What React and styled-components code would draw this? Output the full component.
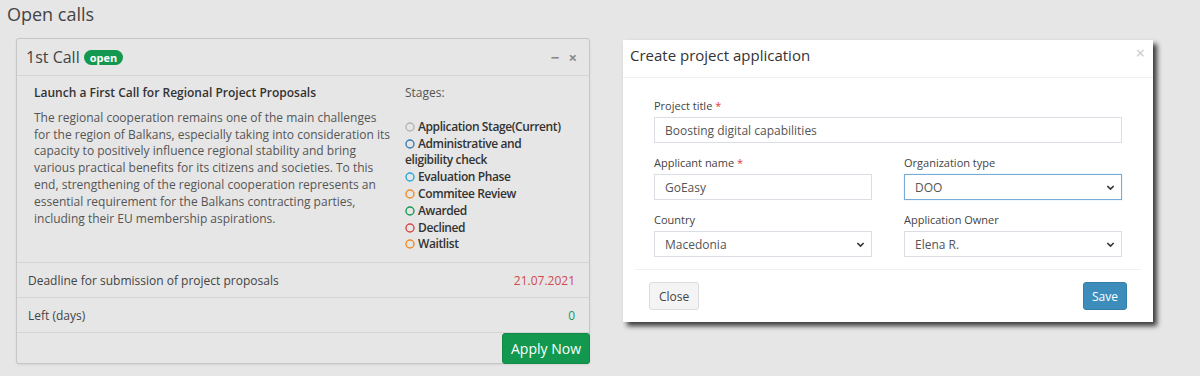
import React from 'react'
import styled, { createGlobalStyle } from 'styled-components'

const GlobalStyle = createGlobalStyle`
  body {
    margin: 0;
    background: #e6e6e6;
    font-family: "Open Sans", "Liberation Sans", sans-serif;
    color: #444;
  }
`

// ----
// Page

const Page = styled.div`
  width: 1200px;
  height: 376px;
  overflow: hidden;
  background: #e6e6e6;
`

const PageTitle = styled.h2`
  margin: 0;
  padding: 2px 7px 0 7px;
  font-size: 18px;
  font-weight: 400;
  line-height: 25px;
  color: #444;
`

const Columns = styled.div`
  display: flex;
  align-items: flex-start;
  gap: 33px;
  padding: 11px 0 0 16px;
`

// ---------
// Call card

const Card = styled.div`
  width: 574px;
  box-sizing: border-box;
  border: 1px solid #c6c6c6;
  border-radius: 3px;
  background: #e6e6e6;
  box-shadow: 0 1px 2px rgba(0, 0, 0, 0.08);
`

const CardHeader = styled.div`
  display: flex;
  align-items: center;
  height: 36px;
  padding: 0 12px 0 9px;
  border-bottom: 1px solid #d4d4d4;
`

const CardTitle = styled.div`
  flex: 1;
  display: flex;
  align-items: center;
  gap: 4px;
  font-size: 16px;
  color: #444;
`

const Badge = styled.span`
  display: inline-block;
  padding: 0 6px;
  height: 15px;
  line-height: 15px;
  border-radius: 8px;
  background: #12994f;
  color: #fff;
  font-size: 11px;
  font-weight: 700;
  margin-top: 1px;
`

const Tools = styled.div`
  display: flex;
  align-items: center;
  gap: 9px;
  color: #8a8a8a;
  font-weight: 700;
  font-size: 15px;
`

const CardBody = styled.div`
  display: grid;
  grid-template-columns: 358px 1fr;
  gap: 13px;
  padding: 9px 22px 9px 17px;
  border-bottom: 1px solid #d4d4d4;
  font-size: 12px;
  line-height: 16.8px;
`

const Lead = styled.div`
  font-weight: 600;
  color: #333;
  margin-bottom: 8px;
`

const Text = styled.p`
  margin: 0;
  color: #555;
`

const StagesLabel = styled.div`
  color: #555;
  margin-bottom: 17px;
`

const StageList = styled.ul`
  list-style: none;
  margin: 0;
  padding: 0;
`

const Stage = styled.li`
  color: #333;
  font-weight: 600;
  font-size: 12px;
  letter-spacing: -0.4px;
  svg {
    vertical-align: -1px;
    margin-right: 3px;
  }
`

const Row = styled.div`
  display: flex;
  justify-content: space-between;
  align-items: center;
  height: 34px;
  padding: 0 14px 0 11px;
  border-bottom: 1px solid #d4d4d4;
  font-size: 12px;
  color: #444;
`

const Value = styled.span`
  color: ${(p) => p.color};
`

const CardFooter = styled.div`
  display: flex;
  justify-content: flex-end;
`

const ApplyButton = styled.button`
  height: 31px;
  margin: 0 -1px -1px 0;
  padding: 0 8px;
  border: 1px solid #0f8a47;
  border-radius: 3px;
  background: #12994f;
  color: #fff;
  font-family: inherit;
  font-size: 14px;
`

const Ring = ({ color }) => (
  <svg width='10' height='10' viewBox='0 0 10 10'>
    <circle cx='5' cy='5' r='4' fill='none' stroke={color} strokeWidth='1.4' />
  </svg>
)

const stages = [
  ['Application Stage(Current)', '#b5b5b5'],
  ['Administrative and eligibility check', '#3a7bb0'],
  ['Evaluation Phase', '#2aa6de'],
  ['Commitee Review', '#ee8c2a'],
  ['Awarded', '#179a55'],
  ['Declined', '#d9464a'],
  ['Waitlist', '#ee8c2a'],
]

const CallCard = () => (
  <Card>
    <CardHeader>
      <CardTitle>
        1st Call <Badge>open</Badge>
      </CardTitle>
      <Tools>
        <span>&#8722;</span>
        <span>&#215;</span>
      </Tools>
    </CardHeader>
    <CardBody>
      <div>
        <Lead>Launch a First Call for Regional Project Proposals</Lead>
        <Text>
          The regional cooperation remains one of the main challenges for the region of Balkans,
          especially taking into consideration its capacity to positively influence regional
          stability and bring various practical benefits for its citizens and societies. To this
          end, strengthening of the regional cooperation represents an essential requirement for
          the Balkans contracting parties, including their EU membership aspirations.
        </Text>
      </div>
      <div>
        <StagesLabel>Stages:</StagesLabel>
        <StageList>
          {stages.map(([name, color]) => (
            <Stage key={name}>
              <Ring color={color} />
              {name}
            </Stage>
          ))}
        </StageList>
      </div>
    </CardBody>
    <Row>
      <span>Deadline for submission of project proposals</span>
      <Value color='#cf4a4a'>21.07.2021</Value>
    </Row>
    <Row>
      <span>Left (days)</span>
      <Value color='#179a55'>0</Value>
    </Row>
    <CardFooter>
      <ApplyButton>Apply Now</ApplyButton>
    </CardFooter>
  </Card>
)

// -----
// Modal

const Modal = styled.div`
  width: 530px;
  margin-top: 2px;
  background: #fff;
  box-shadow: 4px 4px 5px rgba(0, 0, 0, 0.75);
`

const ModalHeader = styled.div`
  position: relative;
  height: 38px;
  padding: 5px 7px 0 7px;
  box-sizing: border-box;
  border-bottom: 1px solid #f0f0f0;
`

const ModalTitle = styled.div`
  font-size: 15px;
  line-height: 21px;
  color: #333;
`

const CloseX = styled.span`
  position: absolute;
  right: 8px;
  top: 2px;
  color: #c8c8c8;
  font-size: 16px;
`

const ModalBody = styled.div`
  padding: 20px 31px 0 31px;
`

const FormGrid = styled.div`
  display: grid;
  grid-template-columns: 1fr 1fr;
  column-gap: 32px;
  row-gap: 12px;
`

const Field = styled.div`
  grid-column: ${(p) => (p.wide ? '1 / span 2' : 'auto')};
`

const Label = styled.div`
  font-size: 11px;
  line-height: 15px;
  color: #444;
  margin-bottom: 4px;
  b {
    color: #e33b3b;
    font-weight: 400;
  }
`

const Control = styled.div`
  display: flex;
  align-items: center;
  justify-content: space-between;
  height: 26px;
  box-sizing: border-box;
  padding: 0 6px 0 10px;
  border: 1px solid ${(p) => (p.focus ? '#7aaad6' : '#dadde3')};
  box-shadow: ${(p) => (p.focus ? '0 0 1px rgba(102, 175, 233, 0.5)' : 'none')};
  font-size: 12px;
  color: #555;
  background: #fff;
`

const Chevron = () => (
  <svg width='9' height='9' viewBox='0 0 10 10'>
    <path d='M1.5 3.3 L5 6.8 L8.5 3.3' fill='none' stroke='#333' strokeWidth='1.8' />
  </svg>
)

const ModalFooter = styled.div`
  display: flex;
  justify-content: space-between;
  margin: 12px 12px 0 12px;
  padding: 12px 14px;
  border-top: 1px solid #f0f0f0;
`

const Button = styled.button`
  height: 28px;
  padding: 0 ${(p) => (p.primary ? '8px' : '9px')};
  border-radius: 3px;
  border: 1px solid ${(p) => (p.primary ? '#367fa9' : '#dcdcdc')};
  background: ${(p) => (p.primary ? '#3c8dbc' : '#f4f4f4')};
  color: ${(p) => (p.primary ? '#fff' : '#444')};
  font-family: inherit;
  font-size: 12px;
`

const ApplicationModal = () => (
  <Modal>
    <ModalHeader>
      <ModalTitle>Create project application</ModalTitle>
      <CloseX>&#215;</CloseX>
    </ModalHeader>
    <ModalBody>
      <FormGrid>
        <Field wide>
          <Label>Project title <b>*</b></Label>
          <Control>Boosting digital capabilities</Control>
        </Field>
        <Field>
          <Label>Applicant name <b>*</b></Label>
          <Control>GoEasy</Control>
        </Field>
        <Field>
          <Label>Organization type</Label>
          <Control focus>DOO <Chevron /></Control>
        </Field>
        <Field>
          <Label>Country</Label>
          <Control>Macedonia <Chevron /></Control>
        </Field>
        <Field>
          <Label>Application Owner</Label>
          <Control>Elena R. <Chevron /></Control>
        </Field>
      </FormGrid>
    </ModalBody>
    <ModalFooter>
      <Button>Close</Button>
      <Button primary>Save</Button>
    </ModalFooter>
  </Modal>
)

export default function App() {
  return (
    <Page>
      <GlobalStyle />
      <PageTitle>Open calls</PageTitle>
      <Columns>
        <CallCard />
        <ApplicationModal />
      </Columns>
    </Page>
  )
}
